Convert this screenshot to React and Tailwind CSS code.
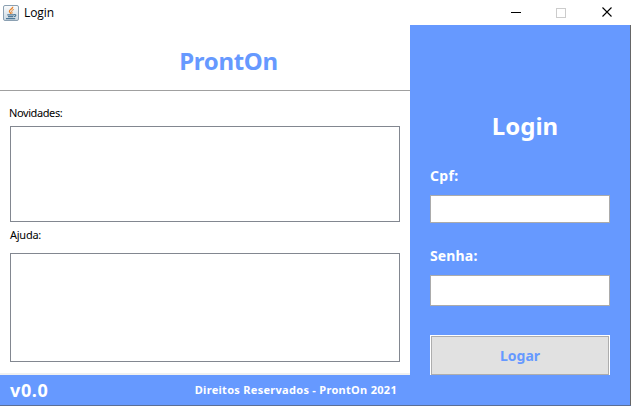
function JavaIcon() {
  return (
    <svg width="16" height="16" viewBox="0 0 16 16" fill="none" className="shrink-0">
      <defs>
        <linearGradient id="java-bg" x1="0" y1="0" x2="0" y2="1">
          <stop offset="0" stopColor="#fbfcfd" />
          <stop offset="1" stopColor="#c9d6e0" />
        </linearGradient>
      </defs>
      <rect x="0.5" y="0.5" width="15" height="15" rx="1.5" fill="url(#java-bg)" stroke="#8ba0b2" />
      <path d="M9.8 1.8C10 3.8 6 4.6 6.4 6.3C6.6 7.3 7.5 7.7 7.7 8.8" stroke="#e8822a" strokeWidth="1.3" />
      <path d="M10.8 4.5C8.9 5.2 8.2 6 8.9 7C9.3 7.7 9.1 8.2 8.7 8.8" stroke="#e8822a" strokeWidth="1" />
      <path d="M4.3 9.9H11M5 11.6H10.2M3 13.6H12.2" stroke="#4e7896" strokeWidth="1.2" />
      <path d="M11 9.6C13.8 9.1 13.2 11.4 10.8 11.8" stroke="#4e7896" strokeWidth="1.1" />
    </svg>
  );
}

function TitleBar() {
  return (
    <header className="flex h-[25px] items-center bg-white pl-[3px]">
      <JavaIcon />
      <span className="ml-[5px] grow font-['Open_Sans',sans-serif] text-[12px] leading-4 tracking-[-0.1px] text-black">Login</span>
      <div className="flex items-center gap-[35px] pr-[18px]">
        <svg width="10" height="10" viewBox="0 0 10 10" shapeRendering="crispEdges">
          <path d="M0 4.5H10" stroke="#000" />
        </svg>
        <svg width="10" height="10" viewBox="0 0 10 10" shapeRendering="crispEdges">
          <rect x="0.5" y="0.5" width="9" height="9" fill="none" stroke="#ccc" />
        </svg>
        <svg width="11" height="11" viewBox="0 0 11 11" className="ml-px">
          <path d="M0.5 0.5L9.5 9.5M9.5 0.5L0.5 9.5" stroke="#000" strokeWidth="1.1" />
        </svg>
      </div>
    </header>
  );
}

export default function App() {
  return (
    <div className="flex h-[406px] w-[631px] flex-col overflow-hidden border-b border-[#5b6f96] bg-white font-['Noto_Sans',sans-serif]">
      <TitleBar />
      <div className="flex grow">
        <main className="flex w-[410px] flex-col">
          <h1 className="flex h-[66px] items-center justify-center border-b border-[#a0a0a0] pl-[47px] pt-[7px] text-[24px] font-bold leading-[30px] tracking-[-0.3px] text-[#6699ff]">
            <span>ProntOn</span>
          </h1>
          <section className="flex grow flex-col px-[10px] text-[11px] leading-[14px] text-black">
            <label htmlFor="novidades" className="-ml-px mt-[15px] tracking-[-0.4px]">Novidades:</label>
            <textarea id="novidades" className="mt-[6px] block h-[96px] w-[390px] resize-none border border-[#828790] bg-white outline-none" />
            <label htmlFor="ajuda" className="mt-[6px] tracking-[-0.25px]">Ajuda:</label>
            <textarea id="ajuda" className="mt-[11px] block h-[109px] w-[390px] resize-none border border-[#828790] bg-white outline-none" />
          </section>
          <footer className="flex h-[32px] items-center justify-between border-t-2 border-[#f0f0f0] bg-[#6699ff] pl-[10px] pr-[13px] font-bold text-white">
            <span className="text-[18px] leading-5 tracking-[0.6px]">v0.0</span>
            <span className="text-[11px] leading-4 tracking-[0.29px]">Direitos Reservados - ProntOn 2021</span>
          </footer>
        </main>
        <aside className="flex w-[221px] flex-col border-r border-[#666] bg-[#6699ff] px-[20px] text-[14px] font-bold leading-5 text-white">
          <h2 className="mt-[86px] pl-[10px] text-center text-[24px] leading-[30px]">Login</h2>
          <label htmlFor="cpf" className="mt-[25px] tracking-[0.3px]">Cpf:</label>
          <input id="cpf" className="mt-[9px] h-[28px] w-[180px] border border-[#ababab] bg-white outline-none" />
          <label htmlFor="senha" className="mt-[23px] tracking-[0.15px]">Senha:</label>
          <input id="senha" type="password" className="mt-[9px] h-[31px] w-[180px] border border-[#ababab] bg-white outline-none" />
          <div className="mt-[29px] flex h-[40px] w-[180px] bg-white px-px pt-px">
            <button className="grow border border-[#adadad] bg-[#e1e1e1] text-[14px] font-bold text-[#6699ff]">Logar</button>
          </div>
        </aside>
      </div>
    </div>
  );
}
